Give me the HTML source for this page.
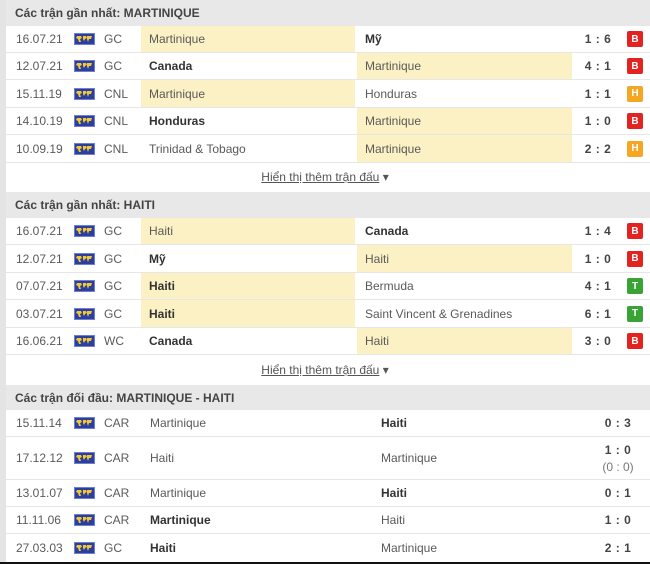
<!DOCTYPE html>
<html><head><meta charset="utf-8"><style>
*{margin:0;padding:0;box-sizing:border-box}
body{width:650px;height:564px;overflow:hidden;background:#fff;font-family:"Liberation Sans",sans-serif;font-size:12px;color:#5a5a5a;position:relative}
.strip{position:absolute;left:0;top:0;width:6px;height:564px;background:#e4e4e4}
.hd{position:absolute;left:6px;width:644px;background:#e8e8e8;color:#444;font-weight:bold;font-size:12px;padding-left:9px;display:flex;align-items:center}
.r{position:absolute;left:6px;width:644px;border-bottom:1px solid #e6e6e6;background:#fff}
.r span{position:absolute;top:0;height:100%;display:flex;align-items:center}
.d{left:10px}
.f{left:68px}
.c{left:98px}
.h{left:135px;width:214px;padding-left:8px}
.a{left:351px;width:215px;padding-left:8px}
.y{background:#fbf1c4}
.b{font-weight:bold;color:#333}
.s{left:572px;width:40px;justify-content:center;font-weight:bold;color:#444;letter-spacing:.5px}
.bd{left:621px;top:50% !important;height:16px !important;width:16px;margin-top:-8px;border-radius:2px;color:#fff;font-weight:bold;font-size:10px;justify-content:center}
.B{background:#e3231f}.H{background:#f5a623}.T{background:#3aa335}
.more{position:absolute;left:6px;width:644px;background:#fff;text-align:center;color:#555}
.more u{text-decoration:underline;margin-left:-6px}
.h3{left:144px}.a3{left:375px}
.s3{left:592px;width:40px;flex-direction:column;justify-content:center;align-items:flex-end;font-weight:bold;color:#444;letter-spacing:.5px}
.bot{position:absolute;left:0;top:562px;width:650px;height:2px;background:#111}
</style></head><body>
<div class="strip"></div>
<svg width="0" height="0" style="position:absolute"><defs><symbol id="fl" viewBox="0 0 21 12"><rect width="21" height="12" fill="#2a3f9e"/><rect x="0.5" y="0.5" width="20" height="11" fill="none" stroke="#6f7fd0" stroke-width="1"/><path d="M3 3h4l1 2-2 1 1 3-2 0-1-3-2-1z M9 3h3l1 2-2 1-1 2-1-2z M13 3h5l-1 3-2 0-1 3-1-3z" fill="#f2c933"/></symbol></defs></svg>

<div class="hd" style="top:0;height:26px">Các trận gần nhất: MARTINIQUE</div>
<div class="r" style="top:26px;height:27px"><span class="d">16.07.21</span><span class="f"><svg width="21" height="12"><use href="#fl"/></svg></span><span class="c">GC</span><span class="h y">Martinique</span><span class="a b">Mỹ</span><span class="s">1 : 6</span><span class="bd B">B</span></div>
<div class="r" style="top:53px;height:27px"><span class="d">12.07.21</span><span class="f"><svg width="21" height="12"><use href="#fl"/></svg></span><span class="c">GC</span><span class="h b">Canada</span><span class="a y">Martinique</span><span class="s">4 : 1</span><span class="bd B">B</span></div>
<div class="r" style="top:80px;height:28px"><span class="d">15.11.19</span><span class="f"><svg width="21" height="12"><use href="#fl"/></svg></span><span class="c">CNL</span><span class="h y">Martinique</span><span class="a">Honduras</span><span class="s">1 : 1</span><span class="bd H">H</span></div>
<div class="r" style="top:108px;height:27px"><span class="d">14.10.19</span><span class="f"><svg width="21" height="12"><use href="#fl"/></svg></span><span class="c">CNL</span><span class="h b">Honduras</span><span class="a y">Martinique</span><span class="s">1 : 0</span><span class="bd B">B</span></div>
<div class="r" style="top:135px;height:28px"><span class="d">10.09.19</span><span class="f"><svg width="21" height="12"><use href="#fl"/></svg></span><span class="c">CNL</span><span class="h">Trinidad &amp; Tobago</span><span class="a y">Martinique</span><span class="s">2 : 2</span><span class="bd H">H</span></div>
<div class="more" style="top:163px;height:29px;line-height:29px"><u>Hiển thị thêm trận đấu</u> ▾</div>

<div class="hd" style="top:192px;height:26px">Các trận gần nhất: HAITI</div>
<div class="r" style="top:218px;height:27px"><span class="d">16.07.21</span><span class="f"><svg width="21" height="12"><use href="#fl"/></svg></span><span class="c">GC</span><span class="h y">Haiti</span><span class="a b">Canada</span><span class="s">1 : 4</span><span class="bd B">B</span></div>
<div class="r" style="top:245px;height:28px"><span class="d">12.07.21</span><span class="f"><svg width="21" height="12"><use href="#fl"/></svg></span><span class="c">GC</span><span class="h b">Mỹ</span><span class="a y">Haiti</span><span class="s">1 : 0</span><span class="bd B">B</span></div>
<div class="r" style="top:273px;height:27px"><span class="d">07.07.21</span><span class="f"><svg width="21" height="12"><use href="#fl"/></svg></span><span class="c">GC</span><span class="h y b">Haiti</span><span class="a">Bermuda</span><span class="s">4 : 1</span><span class="bd T">T</span></div>
<div class="r" style="top:300px;height:28px"><span class="d">03.07.21</span><span class="f"><svg width="21" height="12"><use href="#fl"/></svg></span><span class="c">GC</span><span class="h y b">Haiti</span><span class="a">Saint Vincent &amp; Grenadines</span><span class="s">6 : 1</span><span class="bd T">T</span></div>
<div class="r" style="top:328px;height:27px"><span class="d">16.06.21</span><span class="f"><svg width="21" height="12"><use href="#fl"/></svg></span><span class="c">WC</span><span class="h b">Canada</span><span class="a y">Haiti</span><span class="s">3 : 0</span><span class="bd B">B</span></div>
<div class="more" style="top:355px;height:30px;line-height:30px"><u>Hiển thị thêm trận đấu</u> ▾</div>

<div class="hd" style="top:385px;height:25px">Các trận đối đầu: MARTINIQUE - HAITI</div>
<div class="r" style="top:410px;height:27px"><span class="d">15.11.14</span><span class="f"><svg width="21" height="12"><use href="#fl"/></svg></span><span class="c">CAR</span><span class="h3">Martinique</span><span class="a3 b">Haiti</span><span class="s3">0 : 3</span></div>
<div class="r" style="top:437px;height:43px"><span class="d">17.12.12</span><span class="f"><svg width="21" height="12"><use href="#fl"/></svg></span><span class="c">CAR</span><span class="h3">Haiti</span><span class="a3">Martinique</span><span class="s3"><b>1 : 0</b><i style="font-style:normal;font-weight:normal;color:#777;margin-top:3px;letter-spacing:0">(0 : 0)</i></span></div>
<div class="r" style="top:480px;height:27px"><span class="d">13.01.07</span><span class="f"><svg width="21" height="12"><use href="#fl"/></svg></span><span class="c">CAR</span><span class="h3">Martinique</span><span class="a3 b">Haiti</span><span class="s3">0 : 1</span></div>
<div class="r" style="top:507px;height:27px"><span class="d">11.11.06</span><span class="f"><svg width="21" height="12"><use href="#fl"/></svg></span><span class="c">CAR</span><span class="h3 b">Martinique</span><span class="a3">Haiti</span><span class="s3">1 : 0</span></div>
<div class="r" style="top:534px;height:28px;border:none"><span class="d">27.03.03</span><span class="f"><svg width="21" height="12"><use href="#fl"/></svg></span><span class="c">GC</span><span class="h3 b">Haiti</span><span class="a3">Martinique</span><span class="s3">2 : 1</span></div>
<div class="bot"></div>
</body></html>
